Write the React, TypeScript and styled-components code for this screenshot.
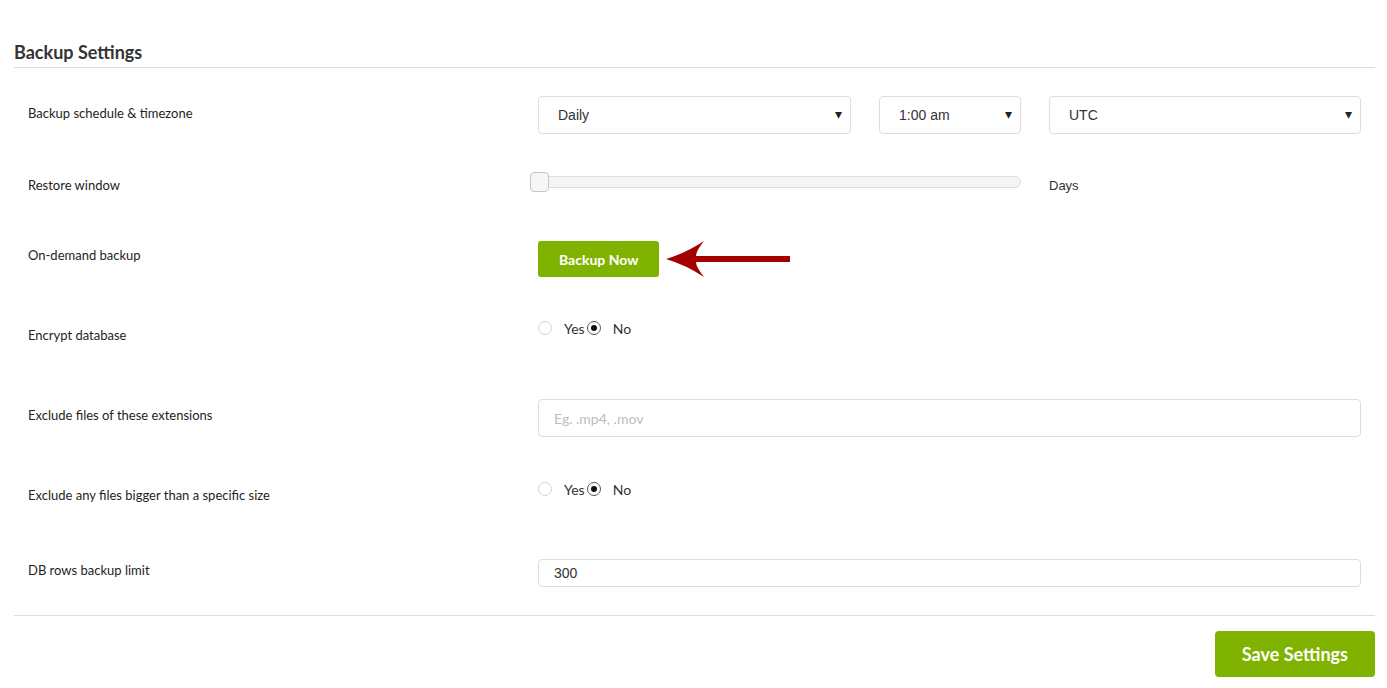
import styled, { createGlobalStyle } from 'styled-components';

const GlobalStyle = createGlobalStyle`
	html, body {
		margin: 0;
		padding: 0;
		background: #ffffff;
	}
	body {
		font-family: Lato, 'Liberation Sans', Arial, sans-serif;
		color: #222222;
	}
	* {
		box-sizing: border-box;
	}
`;

const Page = styled.div`
	padding: 0 12px 0 14px;
`;

const Title = styled.h2`
	margin: 40px 0 0;
	padding-bottom: 3px;
	font-size: 18px;
	line-height: 24px;
	font-weight: 700;
	color: #333333;
	border-bottom: 1px solid #dddddd;
`;

const Row = styled.div<{ $space: number }>`
	display: grid;
	grid-template-columns: 510px 1fr;
	align-items: start;
	margin-top: ${(p) => p.$space}px;
	padding: 0 14px;
`;

const Label = styled.div<{ $offset: number }>`
	margin-top: ${(p) => p.$offset}px;
	font-size: 13px;
	line-height: 18px;
	color: #1e1e1e;
`;

const Controls = styled.div`
	display: flex;
	align-items: flex-start;
	gap: 28px;
`;

const SelectWrap = styled.div<{ $width: number }>`
	position: relative;
	width: ${(p) => p.$width}px;
	flex: none;

	&::after {
		content: '▾';
		position: absolute;
		right: 9px;
		top: 9px;
		font-size: 14px;
		color: #222;
		pointer-events: none;
	}
`;

const Select = styled.select`
	appearance: none;
	width: 100%;
	height: 38px;
	padding: 0 30px 0 19px;
	border: 1px solid #dddddd;
	border-radius: 4px;
	background: #ffffff;
	font-family: 'Liberation Sans', Arial, sans-serif;
	font-size: 14px;
	color: #333333;
	outline: none;
`;

const SliderRow = styled.div`
	display: flex;
	align-items: flex-start;
	margin-left: -8px;
`;

const Track = styled.div`
	position: relative;
	width: 491px;
	height: 12px;
	margin-top: 4px;
	border: 1px solid #dddddd;
	border-radius: 6px;
	background: #f5f5f5;
`;

const Thumb = styled.span`
	position: absolute;
	left: -1px;
	top: -5px;
	width: 19px;
	height: 20px;
	border: 1px solid #c8c8c8;
	border-radius: 4px;
	background: #f6f6f6;
`;

const Unit = styled.span`
	margin: 6px 0 0 28px;
	font-family: 'Liberation Sans', Arial, sans-serif;
	font-size: 13px;
	line-height: 16px;
	color: #333333;
`;

const ButtonLine = styled.div`
	display: flex;
	align-items: center;
`;

const GreenButton = styled.button<{ $big?: boolean }>`
	height: ${(p) => (p.$big ? 46 : 36)}px;
	padding: 0 ${(p) => (p.$big ? 27 : 21)}px;
	border: none;
	border-radius: ${(p) => (p.$big ? 4 : 3)}px;
	background: #80b300;
	color: #ffffff;
	font-family: Lato, 'Liberation Sans', Arial, sans-serif;
	font-size: ${(p) => (p.$big ? 18 : 14)}px;
	font-weight: 700;
	cursor: pointer;
`;

const Arrow = styled.svg`
	margin-left: 7px;
	display: block;
`;

const RadioGroup = styled.div`
	display: flex;
	align-items: center;
	height: 18px;
	font-size: 14px;
	color: #333333;
`;

const Radio = styled.span<{ $checked?: boolean }>`
	position: relative;
	width: 14px;
	height: 14px;
	border-radius: 50%;
	border: 1px solid ${(p) => (p.$checked ? '#555555' : '#d4d4d4')};
	background: #ffffff;
	margin-right: ${(p) => (p.$checked ? 12 : 12)}px;

	&::after {
		content: '';
		display: ${(p) => (p.$checked ? 'block' : 'none')};
		position: absolute;
		left: 3px;
		top: 3px;
		width: 6px;
		height: 6px;
		border-radius: 50%;
		background: #111111;
	}
`;

const RadioText = styled.span`
	margin-right: 2px;
`;

const TextInput = styled.input<{ $height: number; $arial?: boolean }>`
	width: 100%;
	height: ${(p) => p.$height}px;
	padding: 0 15px;
	border: 1px solid #dddddd;
	border-radius: 4px;
	font-family: ${(p) => (p.$arial ? "'Liberation Sans', Arial" : 'Lato, "Liberation Sans"')}, sans-serif;
	font-size: 14px;
	color: #333333;
	outline: none;

	&::placeholder {
		color: #bdbdbd;
	}
`;

const Footer = styled.div`
	margin-top: 28px;
	padding-top: 15px;
	border-top: 1px solid #dddddd;
	display: flex;
	justify-content: flex-end;
`;

function YesNo() {
	return (
		<RadioGroup>
			<Radio />
			<RadioText>Yes</RadioText>
			<Radio $checked />
			<span>No</span>
		</RadioGroup>
	);
}

export default function App() {
	return (
		<Page>
			<GlobalStyle />
			<Title>Backup Settings</Title>

			<Row $space={28}>
				<Label $offset={8}>Backup schedule &amp; timezone</Label>
				<Controls>
					<SelectWrap $width={313}>
						<Select defaultValue="daily">
							<option value="daily">Daily</option>
						</Select>
					</SelectWrap>
					<SelectWrap $width={142}>
						<Select defaultValue="1">
							<option value="1">1:00 am</option>
						</Select>
					</SelectWrap>
					<SelectWrap $width={312}>
						<Select defaultValue="utc">
							<option value="utc">UTC</option>
						</Select>
					</SelectWrap>
				</Controls>
			</Row>

			<Row $space={38}>
				<Label $offset={4}>Restore window</Label>
				<SliderRow>
					<Track>
						<Thumb />
					</Track>
					<Unit>Days</Unit>
				</SliderRow>
			</Row>

			<Row $space={46}>
				<Label $offset={6}>On-demand backup</Label>
				<ButtonLine>
					<GreenButton>Backup Now</GreenButton>
					<Arrow width="124" height="38" viewBox="0 0 124 38">
						<path
							d="M0 19 Q20 13 38 1 Q30 11 30 16 L124 16 L124 22 L30 22 Q30 27 38 37 Q20 25 0 19 Z"
							fill="#a30000"
						/>
					</Arrow>
				</ButtonLine>
			</Row>

			<Row $space={41}>
				<Label $offset={7}>Encrypt database</Label>
				<YesNo />
			</Row>

			<Row $space={55}>
				<Label $offset={7}>Exclude files of these extensions</Label>
				<TextInput $height={38} placeholder="Eg. .mp4, .mov" />
			</Row>

			<Row $space={43}>
				<Label $offset={6}>Exclude any files bigger than a specific size</Label>
				<YesNo />
			</Row>

			<Row $space={55}>
				<Label $offset={2}>DB rows backup limit</Label>
				<TextInput $height={28} $arial defaultValue="300" />
			</Row>

			<Footer>
				<GreenButton $big>Save Settings</GreenButton>
			</Footer>
		</Page>
	);
}
